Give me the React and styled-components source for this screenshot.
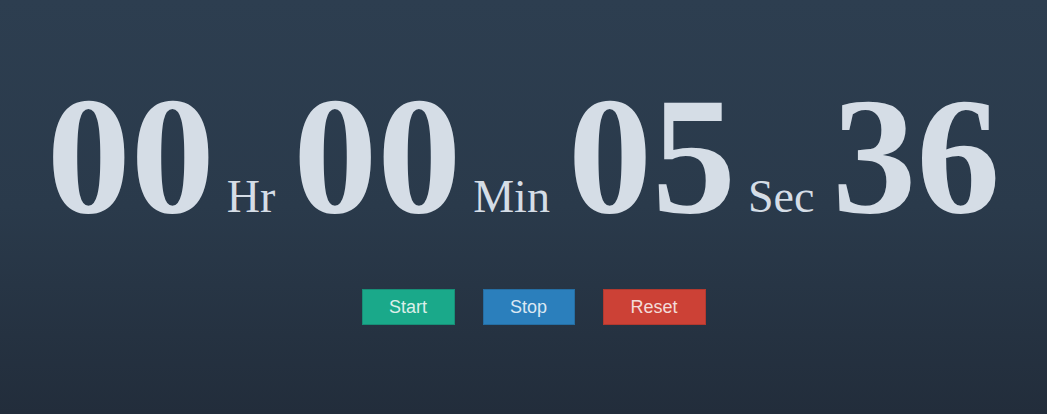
import React from "react";
import styled, { createGlobalStyle } from "styled-components";

const Global = createGlobalStyle`
  html, body { margin: 0; padding: 0; height: 100%; }
  body { background: #26323f; }
  #root { height: 100%; }
`;

const Page = styled.div`
  width: 100%;
  height: 414px;
  background: linear-gradient(to bottom, #2d3e50 0%, #2a3a4b 50%, #222d3b 100%);
  display: flex;
  flex-direction: column;
  align-items: center;
  padding-top: 71px;
  box-sizing: border-box;
  overflow: hidden;
`;

const Clock = styled.div`
  display: flex;
  align-items: baseline;
  justify-content: center;
  gap: 18px;
  color: #d5dde6;
  font-family: "Liberation Serif", "Times New Roman", serif;
`;

const Unit = styled.div`
  display: flex;
  align-items: baseline;
  gap: 12px;
`;

const Digits = styled.span`
  font-size: 168px;
  font-weight: 700;
  line-height: 1;
`;

const Label = styled.span`
  font-size: 46px;
  font-weight: 400;
  line-height: 1;
`;

const Buttons = styled.div`
  display: flex;
  gap: 28px;
  margin-top: 50px;
  margin-left: 20px;
`;

const Button = styled.button`
  height: 36px;
  min-width: ${(p) => p.$w}px;
  padding: 0;
  border: 1px solid ${(p) => p.$border};
  background: ${(p) => p.$bg};
  color: ${(p) => p.$fg};
  font-family: "Liberation Sans", Arial, sans-serif;
  font-size: 18px;
  cursor: pointer;
`;

const units = [
  { v: "00", l: "Hr" },
  { v: "00", l: "Min" },
  { v: "05", l: "Sec" },
  { v: "36", l: "" },
];

export default function App() {
  return (
    <>
      <Global />
      <Page>
        <Clock>
          {units.map((u, i) => (
            <Unit key={i}>
              <Digits>{u.v}</Digits>
              {u.l && <Label>{u.l}</Label>}
            </Unit>
          ))}
        </Clock>
        <Buttons>
          <Button $w={93} $bg="#1aa98a" $border="#178f77" $fg="#dcefe9">Start</Button>
          <Button $w={92} $bg="#2b7fbc" $border="#256ea3" $fg="#dbe8f3">Stop</Button>
          <Button $w={103} $bg="#cc4136" $border="#b2392f" $fg="#f3dcd9">Reset</Button>
        </Buttons>
      </Page>
    </>
  );
}
